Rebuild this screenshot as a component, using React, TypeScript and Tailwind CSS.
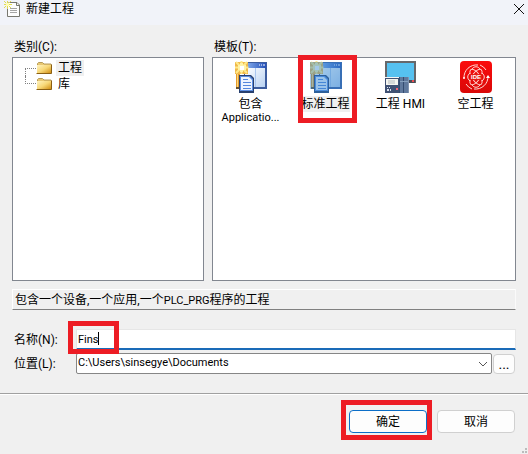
import React from "react";

function SparkDocIcon() {
  return (
    <svg width="18" height="18" viewBox="0 0 18 18" className="shrink-0" aria-hidden="true">
      <path d="M4.500 2.500H13l2.500 2.500v11.500h-12v-9" fill="#fdfdfd" stroke="#77776f" />
      <path d="M12.500 2.500v3h3" fill="none" stroke="#77776f" />
      <path d="M6 8.500h7M6 10.500h7M6 12.500h7" stroke="#a5a5a5" />
      <path d="M3.500 1v8M0 4.500h8M0 1l7 7M7 1L0 8" stroke="#e3dc50" />
      <rect x="2" y="3" width="3" height="3" fill="#fffdb0" />
    </svg>
  );
}

function FolderIcon() {
  return (
    <svg width="16" height="14" viewBox="0 0 16 14" className="shrink-0" aria-hidden="true">
      <defs>
        <linearGradient id="folder" x1="0" y1="0" x2="1" y2="1">
          <stop offset="0" stopColor="#fff3c0" />
          <stop offset="0.5" stopColor="#f7d777" />
          <stop offset="1" stopColor="#cf8a0d" />
        </linearGradient>
      </defs>
      <path d="M1.500 12.500v-10l1-1h4l1.500 1.500h7v9.500z" fill="#e8c873" stroke="#b79b5a" />
      <path d="M1 4h14v8.500H1z" fill="url(#folder)" />
      <path d="M.5 12.500h15v-9" fill="none" stroke="#8a5f14" />
    </svg>
  );
}

function ProjectIcon({ selected = false }: { selected?: boolean }) {
  return (
    <svg width="32" height="32" viewBox="0 0 32 32" aria-hidden="true">
      <defs>
        <linearGradient id="windowBar" x1="0" x2="1">
          <stop offset="0" stopColor="#8fb7f2" />
          <stop offset="1" stopColor="#2450b8" />
        </linearGradient>
        <linearGradient id="windowBody" x1="0" y1="0" x2="1" y2="1">
          <stop offset="0" stopColor="#ffffff" />
          <stop offset="1" stopColor="#b9d2f2" />
        </linearGradient>
      </defs>
      <path d="M9 1h23v27H9z" fill="#3c5c9e" />
      <path d="M9 2h22v5H9z" fill="url(#windowBar)" />
      <path d="M24 4h1M26 4h1M28 4h2" stroke="#fff" />
      <path d="M10 7h20v19H10z" fill="url(#windowBody)" />
      <path d="M20 7h1v19h-1z" fill="#a9c6ef" />
      <path d="M1 13h4v15H1z" fill="#e39b2c" />
      <path d="M2 13h1v13H2z" fill="#ffd77a" />
      <path d="M1 26h4v2H1z" fill="#66512f" />
      <path d="M0 1h13v12H0z" fill="#f0b84a" />
      <path d="M6.500 0v13M0 6.500h13.500M1 1l11 11M12 1L1 12" stroke="#ffe98a" strokeWidth="2" />
      <path d="M3 4h2V2h3v2h3v5H8v2H5V9H3z" fill="#fff3a8" />
      <rect x="5" y="5" width="4" height="4" fill="#fff" />
      <path d="M4 14h12l3 3v15H4z" fill="#28406f" />
      <path d="M5 15h10l3 3v12H5z" fill="#5d8fe3" />
      <path d="M6 16h8l3 3v10H6z" fill="#edf4ff" />
      <path d="M8 18.500h5M8 21.500h8M8 24.500h8M8 27.500h8" stroke="#5587dc" />
      {selected && <path d="M0 1h32v27H19v4H4v-4H0z" fill="#3388d0" opacity="0.45" />}
    </svg>
  );
}

function HmiIcon() {
  return (
    <svg width="32" height="32" viewBox="0 0 32 32" aria-hidden="true">
      <path d="M0 0h31v22H0z" fill="#66686b" />
      <path d="M2 2h27v17H2z" fill="#56c1f0" />
      <path d="M24 19h6v3h-6z" fill="#484d58" />
      <path d="M27 19h2v2h-2z" fill="#ee4c50" />
      <path d="M0 16h15v16H0z" fill="#405173" />
      <path d="M0 16h14v1H0z" fill="#f4f4f4" />
      <path d="M1 18h12v6H1z" fill="#f5f5ef" />
      <path d="M3 19h7v4H3z" fill="#d5d8d7" />
      <path d="M2 26h1v1H2zM4 26h1v1H4zM2 28h2v2H2zM5 28h1v2H5z" fill="#dce2ef" />
      <path d="M11 27h2v2h-2z" fill="#f06575" />
      <path d="M15 16h9v16h-9z" fill="#60799d" />
      <path d="M14 16h1v16h-1zM18 16h1v16h-1z" fill="#344c70" />
      <path d="M15 20.500h9" stroke="#86a0bd" />
      <path d="M23 16h1v16h-1z" fill="#8194b2" />
    </svg>
  );
}

function EmptyIcon() {
  return (
    <svg width="32" height="32" viewBox="0 0 32 32" aria-hidden="true">
      <defs>
        <linearGradient id="red" x1="0" y1="0" x2="0" y2="1">
          <stop offset="0" stopColor="#fb0c0c" />
          <stop offset="1" stopColor="#d90808" />
        </linearGradient>
      </defs>
      <rect width="32" height="32" rx="4" fill="url(#red)" />
      <g fill="none" stroke="#ffd9d3" strokeWidth="1">
        <ellipse cx="16" cy="16" rx="4" ry="9" transform="rotate(35 16 16)" />
        <ellipse cx="16" cy="16" rx="4" ry="9" transform="rotate(-35 16 16)" />
        <path d="M12 8c2-3 6-3 8 0M12 24c2 3 6 3 8 0M10 12c-3 2-3 6 0 8M22 12c3 2 3 6 0 8" />
        <path d="M18 4A12.500 12.500 0 0 0 4 17M14 28a12.500 12.500 0 0 0 14-13" />
        <path d="M20 4a12 12 0 0 1 6 5M6 23a12 12 0 0 0 6 5" />
      </g>
      <circle cx="4" cy="17" r="1" fill="#fff" />
      <path d="M26 17l2-3 2 3z" fill="#fff" />
      <rect x="10" y="13" width="12" height="6" fill="#e51b15" />
      <text x="16" y="18" textAnchor="middle" fill="#fff" fontSize="6" fontWeight="bold" fontFamily="Liberation Sans, sans-serif">IDE</text>
    </svg>
  );
}

function Highlight({ className }: { className: string }) {
  return <span aria-hidden="true" className={`pointer-events-none absolute z-10 border-5 border-[#ed1c24] ${className}`} />;
}

const templates = [
  { title: "包含", detail: "Applicatio...", icon: <ProjectIcon /> },
  { title: "标准工程", icon: <ProjectIcon selected />, selected: true },
  { title: "工程 HMI", icon: <HmiIcon /> },
  { title: "空工程", icon: <EmptyIcon /> },
];

const categories = ["工程", "库"];

export default function App() {
  return (
    <div className="relative flex min-h-screen flex-col bg-[#f0f0f0] font-[Roboto,'Noto_Sans_CJK_SC',sans-serif] text-xs text-black">
      <header className="flex h-[25px] items-start justify-between bg-[#f1f3f9] pl-1 pr-[3px]">
        <div className="flex items-center gap-1">
          <SparkDocIcon />
          <h1 className="leading-[18px]">新建工程</h1>
        </div>
        <button type="button" aria-label="关闭" className="flex h-[18px] w-3 items-center justify-center">
          <svg width="10" height="10" viewBox="0 0 10 10" aria-hidden="true">
            <path d="M0 0l10 10M10 0L0 10" stroke="#111" />
          </svg>
        </button>
      </header>

      <main className="flex flex-col px-3 pt-3">
        <div className="flex gap-2">
          <section className="flex w-48 shrink-0 flex-col">
            <h2 className="px-0.5 leading-5">类别(C):</h2>
            <ul className="h-56 border border-[#828790] bg-white pl-3 pt-0.5">
              {categories.map((name, i) => (
                <li key={name} className="flex h-4 items-center">
                  <span className={i === 0 ? "h-2 w-[11px] self-end border-l border-t border-dotted border-[#808080]" : "h-2 w-[11px] self-start border-b border-l border-dotted border-[#808080]"} />
                  <FolderIcon />
                  <span className={i === 0 ? "ml-1 bg-[#f0f0f0] px-0.5 leading-4" : "ml-1 px-0.5 leading-4"}>{name}</span>
                </li>
              ))}
            </ul>
          </section>

          <section className="flex min-w-0 flex-1 flex-col">
            <h2 className="px-0.5 leading-5">模板(T):</h2>
            <ul className="flex h-56 flex-wrap content-start border border-[#828790] bg-white pt-[3px]">
              {templates.map((t) => (
                <li key={t.title} className="relative flex w-[75px] flex-col items-center whitespace-nowrap">
                  {t.icon}
                  <span className={t.selected ? "mt-[3px] bg-[#f0f0f0] leading-4" : "mt-[3px] leading-4"}>{t.title}</span>
                  {t.detail && <span className="text-[11px] leading-3">{t.detail}</span>}
                  {t.selected && <Highlight className="-top-1.5 left-2.5 h-[68px] w-[59px]" />}
                </li>
              ))}
            </ul>
          </section>
        </div>

        <p className="mt-2 h-[21px] border border-b-[#808080] border-l-white border-r-[#fafafa] border-t-white px-0.5 leading-5">
          包含一个设备,一个应用,一个<span className="text-[11px]">PLC_PRG</span>程序的工程
        </p>

        <div className="mt-[19px] flex h-[21px] items-center">
          <label htmlFor="name" className="w-16 shrink-0 px-0.5">名称(N):</label>
          <div className="relative flex-1">
            <input id="name" defaultValue="Fins" className="block h-[21px] w-full border border-b-2 border-[#e6e6e6] border-b-[#1a6bb8] bg-white px-px text-[11px] outline-none" />
            <span aria-hidden="true" className="absolute left-[22px] top-[3px] h-[13px] w-px bg-black" />
            <Highlight className="-left-2 -top-2 h-[33px] w-[51px]" />
          </div>
        </div>

        <div className="mt-[3px] flex h-[21px] items-center">
          <label htmlFor="location" className="w-16 shrink-0 px-0.5">位置(L):</label>
          <div className="relative flex-1">
            <select id="location" className="block h-[21px] w-full appearance-none rounded-xs border border-[#868686] bg-white pl-px text-[11px] outline-none">
              <option>C:\Users\sinsegye\Documents</option>
            </select>
            <svg width="10" height="6" viewBox="0 0 10 6" className="pointer-events-none absolute right-1 top-2" aria-hidden="true">
              <path d="M1 1l4 4 4-4" fill="none" stroke="#555" />
            </svg>
          </div>
          <button type="button" aria-label="浏览" className="ml-px mr-px h-5 w-[22px] rounded-sm border border-[#d0d0d0] bg-[#fdfdfd] text-sm leading-4">...</button>
        </div>
      </main>

      <footer className="mt-[19px] flex flex-1 items-start justify-end gap-2.5 border-t border-[#a0a0a0] px-[13px] pt-4 shadow-[inset_0_1px_0_#fff]">
        <div className="relative">
          <button type="button" className="block h-[23px] w-[78px] rounded-sm border border-[#0b6ec8] bg-[#fdfdfd]">确定</button>
          <Highlight className="-left-2 -top-2.5 h-10 w-[91px]" />
        </div>
        <button type="button" className="h-[23px] w-[78px] rounded-sm border border-[#d0d0d0] bg-[#fdfdfd]">取消</button>
      </footer>
      <svg width="6" height="6" viewBox="0 0 6 6" className="pointer-events-none absolute bottom-0 right-0" aria-hidden="true">
        <path d="M3 0h2v2H3zM0 3h2v2H0zM3 3h2v2H3z" fill="#bcbcbc" />
      </svg>
    </div>
  );
}
